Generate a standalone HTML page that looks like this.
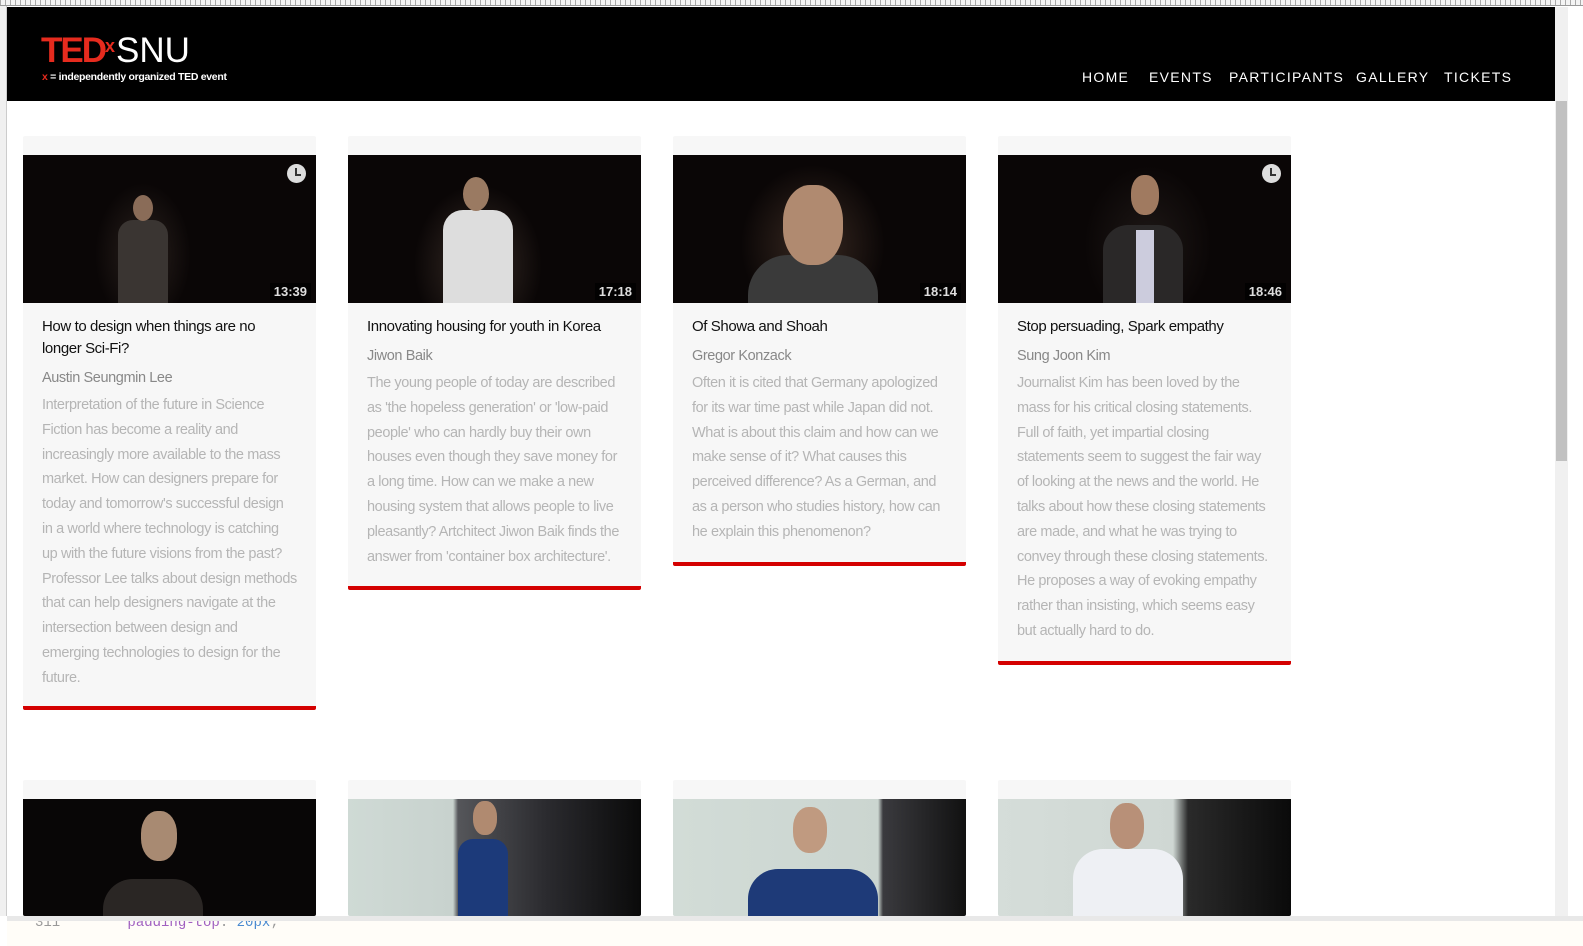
<!DOCTYPE html>
<html style="overflow:hidden;width:1583px;height:946px"><head><meta charset="utf-8"><style>
*{margin:0;padding:0;box-sizing:border-box}
body{width:1583px;height:946px;overflow:hidden;background:#fff;font-family:"Liberation Sans",sans-serif;position:relative}
.ruler{position:absolute;left:0;top:0;width:1583px;height:6px;background:repeating-linear-gradient(90deg,#aaa 0 1px,#f4f4f4 1px 5px);border-bottom:1px solid #999}
.leftbar{position:absolute;left:0;top:6px;width:7px;height:910px;background:#f0f0f0;border-right:1px solid #ccc}
header{position:absolute;left:7px;top:7px;width:1548px;height:94px;background:#000}
.logo{position:absolute;left:34px;top:24px;color:#fff;white-space:nowrap}
.logo .ted{color:#e62b1e;font-weight:bold;font-size:35px;letter-spacing:-2px}
.logo sup{color:#e62b1e;font-weight:bold;font-size:18px;position:relative;top:-4px}
.logo .snu{font-size:35px;margin-left:1px}
.logo .sub{position:absolute;left:1px;top:40px;font-size:10.5px;font-weight:bold;white-space:nowrap;letter-spacing:-0.3px}
nav{position:absolute;top:62px;left:0;width:1548px;color:#fff;font-size:14px;letter-spacing:1.3px}
nav span{position:absolute}
.scroll{position:absolute;left:1555px;top:7px;width:13px;height:909px;background:#f0f0f0}
.scroll .thumb{position:absolute;left:1px;top:94px;width:11px;height:360px;background:#c1c1c1}
.card{position:absolute;width:293px;background:#f7f7f7;border-bottom:4px solid #d40000;border-radius:2px;overflow:hidden}
.img{position:absolute;left:0;top:19px;width:293px;height:148px;overflow:hidden}
.dur{position:absolute;right:5px;bottom:3px;background:rgba(0,0,0,.75);color:#ddd;font-weight:bold;font-size:13px;padding:1px 4px}
.clk{position:absolute;right:10px;top:9px;width:19px;height:19px;border-radius:50%;background:#ddd}
.clk:after{content:"";position:absolute;left:8px;top:4px;width:4px;height:6px;border-left:2px solid #333;border-bottom:2px solid #333}
.txt{position:absolute;left:19px;top:180px;white-space:nowrap;letter-spacing:-0.4px}
.t{font-size:15px;color:#111;line-height:22px}
.a{font-size:14.5px;color:#888;line-height:20px;margin-top:8px}
.d{font-size:14.5px;color:#b5b5b5;line-height:24.8px;margin-top:5px}
.bottom{position:absolute;left:7px;top:916px;width:1576px;height:30px;background:#fffdf8;border-top:5px solid #e8e8e8;font-family:"Liberation Mono",monospace;font-size:14px;color:#999;overflow:hidden;z-index:5}
</style></head><body>
<div class="ruler"></div>
<div class="leftbar"></div>
<header>
 <div class="logo"><span class="ted">TED</span><sup>x</sup><span class="snu">SNU</span>
 <div class="sub"><span style="color:#e62b1e">x</span> = independently organized TED event</div></div>
 <nav><span style="left:1075px">HOME</span><span style="left:1142px">EVENTS</span><span style="left:1222px">PARTICIPANTS</span><span style="left:1349px">GALLERY</span><span style="left:1437px">TICKETS</span></nav>
</header>
<div class="scroll"><div class="thumb"></div></div>

<div class="card" style="left:23px;top:136px;height:574px">
 <div class="img" style="background:radial-gradient(ellipse 60px 90px at 120px 100px,#2a211d,#0a0606 80%)">
  <div style="position:absolute;left:95px;top:65px;width:50px;height:90px;background:#3a3532;border-radius:15px 15px 0 0"></div>
  <div style="position:absolute;left:110px;top:40px;width:20px;height:26px;background:#8a6c58;border-radius:50%"></div>
  <div class="clk"></div><div class="dur">13:39</div></div>
 <div class="txt"><div class="t">How to design when things are no<br>longer Sci-Fi?</div><div class="a">Austin Seungmin Lee</div>
 <div class="d">Interpretation of the future in Science<br>Fiction has become a reality and<br>increasingly more available to the mass<br>market. How can designers prepare for<br>today and tomorrow's successful design<br>in a world where technology is catching<br>up with the future visions from the past?<br>Professor Lee talks about design methods<br>that can help designers navigate at the<br>intersection between design and<br>emerging technologies to design for the<br>future.</div></div>
</div>

<div class="card" style="left:348px;top:136px;height:454px">
 <div class="img" style="background:radial-gradient(ellipse 80px 100px at 130px 110px,#3a2e28,#0a0606 80%)">
  <div style="position:absolute;left:95px;top:55px;width:70px;height:95px;background:#ddd;border-radius:20px 20px 0 0"></div>
  <div style="position:absolute;left:115px;top:22px;width:26px;height:34px;background:#9a7a62;border-radius:50%"></div>
  <div class="dur">17:18</div></div>
 <div class="txt"><div class="t">Innovating housing for youth in Korea</div><div class="a">Jiwon Baik</div>
 <div class="d">The young people of today are described<br>as 'the hopeless generation' or 'low-paid<br>people' who can hardly buy their own<br>houses even though they save money for<br>a long time. How can we make a new<br>housing system that allows people to live<br>pleasantly? Artchitect Jiwon Baik finds the<br>answer from 'container box architecture'.</div></div>
</div>

<div class="card" style="left:673px;top:136px;height:430px">
 <div class="img" style="background:radial-gradient(ellipse 90px 100px at 140px 90px,#3a2a22,#0a0606 80%)">
  <div style="position:absolute;left:75px;top:100px;width:130px;height:60px;background:#3a3a3a;border-radius:40px 40px 0 0"></div>
  <div style="position:absolute;left:110px;top:30px;width:60px;height:80px;background:#b08a70;border-radius:45%"></div>
  <div class="dur">18:14</div></div>
 <div class="txt"><div class="t">Of Showa and Shoah</div><div class="a">Gregor Konzack</div>
 <div class="d">Often it is cited that Germany apologized<br>for its war time past while Japan did not.<br>What is about this claim and how can we<br>make sense of it? What causes this<br>perceived difference? As a German, and<br>as a person who studies history, how can<br>he explain this phenomenon?</div></div>
</div>

<div class="card" style="left:998px;top:136px;height:529px">
 <div class="img" style="background:radial-gradient(ellipse 80px 100px at 150px 90px,#1e1816,#0a0606 80%)">
  <div style="position:absolute;left:105px;top:70px;width:80px;height:80px;background:#2a2828;border-radius:25px 25px 0 0"></div>
  <div style="position:absolute;left:138px;top:75px;width:18px;height:75px;background:#ccd"></div>
  <div style="position:absolute;left:133px;top:20px;width:28px;height:40px;background:#a07a60;border-radius:45%"></div>
  <div class="clk"></div><div class="dur">18:46</div></div>
 <div class="txt"><div class="t">Stop persuading, Spark empathy</div><div class="a">Sung Joon Kim</div>
 <div class="d">Journalist Kim has been loved by the<br>mass for his critical closing statements.<br>Full of faith, yet impartial closing<br>statements seem to suggest the fair way<br>of looking at the news and the world. He<br>talks about how these closing statements<br>are made, and what he was trying to<br>convey through these closing statements.<br>He proposes a way of evoking empathy<br>rather than insisting, which seems easy<br>but actually hard to do.</div></div>
</div>

<div class="card" style="left:23px;top:780px;height:136px;border:0">
 <div class="img" style="background:#080606;height:117px">
  <div style="position:absolute;left:80px;top:80px;width:100px;height:80px;background:#2a2624;border-radius:30px 30px 0 0"></div>
  <div style="position:absolute;left:118px;top:12px;width:36px;height:50px;background:#a88a72;border-radius:45%"></div></div>
</div>
<div class="card" style="left:348px;top:780px;height:136px;border:0">
 <div class="img" style="background:linear-gradient(90deg,#cfdad5 0,#c8d2ce 105px,#55565a 110px,#2a2a2e 200px,#0a0a0a 293px);height:117px">
  <div style="position:absolute;left:110px;top:40px;width:50px;height:110px;background:#1c3a7a;border-radius:15px 15px 0 0"></div>
  <div style="position:absolute;left:125px;top:2px;width:24px;height:34px;background:#b08a70;border-radius:45%"></div></div>
</div>
<div class="card" style="left:673px;top:780px;height:136px;border:0">
 <div class="img" style="background:linear-gradient(90deg,#d2dcd7 0,#cbd5d0 205px,#3a3a3e 210px,#111 293px);height:117px">
  <div style="position:absolute;left:75px;top:70px;width:130px;height:80px;background:#1e3a78;border-radius:30px 30px 0 0"></div>
  <div style="position:absolute;left:120px;top:8px;width:34px;height:46px;background:#c09a80;border-radius:45%"></div></div>
</div>
<div class="card" style="left:998px;top:780px;height:136px;border:0">
 <div class="img" style="background:linear-gradient(90deg,#d5ddd9 0,#cfd7d3 175px,#2a2a2a 190px,#0a0a0a 293px);height:117px">
  <div style="position:absolute;left:75px;top:50px;width:110px;height:100px;background:#eef0f4;border-radius:30px 30px 0 0"></div>
  <div style="position:absolute;left:112px;top:4px;width:34px;height:46px;background:#b89078;border-radius:45%"></div></div>
</div>

<div class="bottom"><div style="margin-left:28px;margin-top:-6px;color:#999">311&nbsp;&nbsp;&nbsp;&nbsp;&nbsp;&nbsp;&nbsp;&nbsp;<span style="color:#a060c0">padding-top</span>: <span style="color:#4a8ad0">20px</span>;</div></div>
</body></html>
